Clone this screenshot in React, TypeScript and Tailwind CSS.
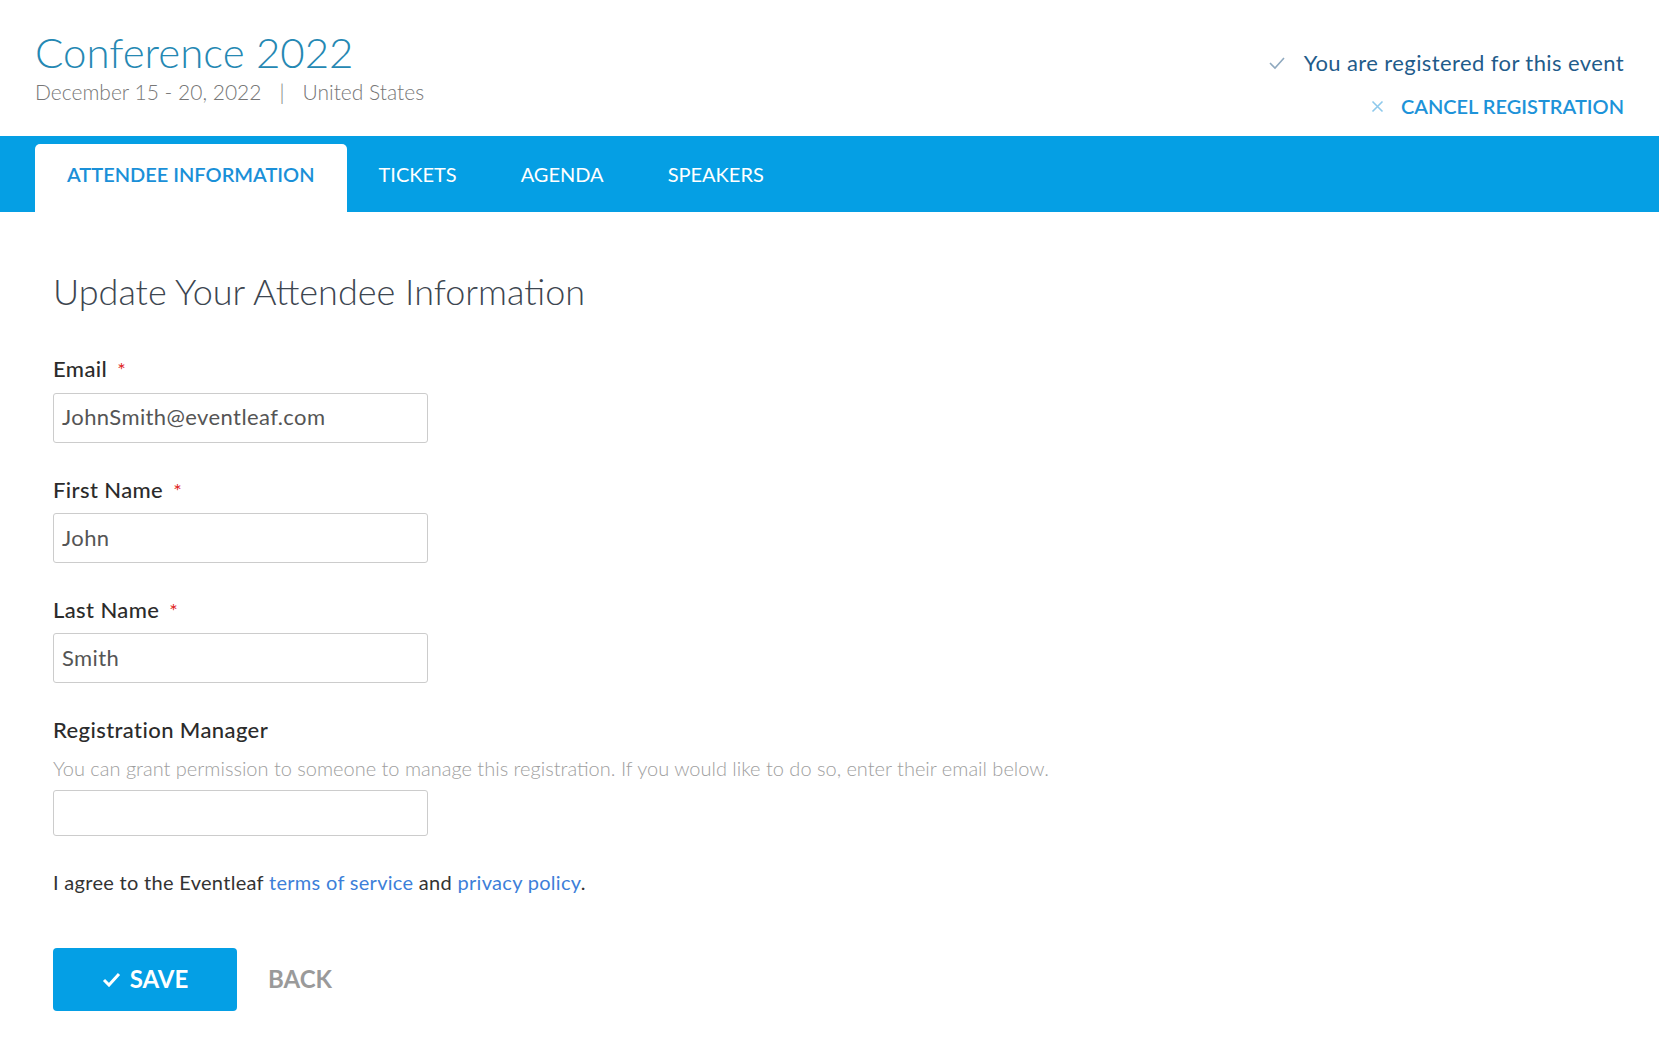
import React from "react"

const tabs = ["ATTENDEE INFORMATION", "TICKETS", "AGENDA", "SPEAKERS"]

function Field({
  label,
  required,
  value,
}: {
  label: string
  required?: boolean
  value: string
}) {
  return (
    <div className="mt-[34px] flex flex-col">
      <div className="text-[22px] leading-[1.2] font-medium tracking-[0.4px] text-[#2b2b2b]">
        {label}
        {required && <span className="ml-[10px] text-[20px] font-normal text-[#e02424]">*</span>}
      </div>
      <div className="mt-[10px] flex h-[50px] w-[375px] items-center rounded-[3px] border border-[#cccccc] px-[8px] text-[22px] leading-[1.2] tracking-[0.4px] text-[#555555]">
        {value}
      </div>
    </div>
  )
}

export default function App() {
  return (
    <div className="min-h-screen bg-white font-['Lato',sans-serif]">
      <header className="flex h-[136px] justify-between px-[35px]">
        <div className="pt-[27px]">
          <h1 className="text-[42px] leading-[1.2] font-light text-[#2588b3]">Conference 2022</h1>
          <p className="mt-[2px] text-[21px] leading-[1.2] font-light text-[#777777]">
            December 15 - 20, 2022
            <span className="mx-[18px]">|</span>
            United States
          </p>
        </div>
        <div className="flex flex-col items-end pt-[50px]">
          <div className="flex items-center gap-[18px] text-[22px] leading-[1.2] tracking-[0.4px] text-[#1f5c8b]">
            <svg width="18" height="14" viewBox="0 0 18 14" fill="none">
              <polyline points="2,7 7,12 16,2" stroke="#8fa9bf" strokeWidth="1.6" />
            </svg>
            You are registered for this event
          </div>
          <div className="mt-[18px] flex items-center gap-[17px] text-[20px] leading-[1.2] font-semibold text-[#1d93d9]">
            <svg width="13" height="13" viewBox="0 0 13 13" fill="none">
              <path d="M1.5 1.5l10 10M11.5 1.5l-10 10" stroke="#8dc9ec" strokeWidth="1.6" />
            </svg>
            CANCEL REGISTRATION
          </div>
        </div>
      </header>

      <nav className="flex h-[76px] items-end bg-[#059fe4] pl-[35px]">
        {tabs.map((tab, i) => (
          <div
            key={tab}
            className={
              i === 0
                ? "flex h-[68px] items-center rounded-t-[5px] bg-white px-[32px] pb-[8px] text-[20px] font-semibold text-[#1a90d8]"
                : "flex h-[68px] items-center px-[32px] pb-[8px] text-[20px] text-white"
            }
          >
            {tab}
          </div>
        ))}
      </nav>

      <main className="flex flex-col items-start pl-[53px] pt-[58px]">
        <h2 className="text-[36px] leading-[1.2] font-light text-[#3d4650]">Update Your Attendee Information</h2>

        <div className="mt-[9px] flex flex-col">
          <Field label="Email" required value="JohnSmith@eventleaf.com" />
          <Field label="First Name" required value="John" />
          <Field label="Last Name" required value="Smith" />
        </div>

        <div className="mt-[34px] flex flex-col">
          <div className="text-[22px] leading-[1.2] font-medium tracking-[0.4px] text-[#2b2b2b]">Registration Manager</div>
          <p className="mt-[12px] text-[20px] leading-[1.2] font-light text-[#9e9e9e]">
            You can grant permission to someone to manage this registration. If you would like to do so, enter their email below.
          </p>
          <div className="mt-[10px] h-[46px] w-[375px] rounded-[3px] border border-[#cccccc]" />
        </div>

        <p className="mt-[34px] text-[20px] leading-[1.2] tracking-[0.3px] text-[#333333]">
          I agree to the Eventleaf <span className="text-[#3d7fd9]">terms of service</span> and{" "}
          <span className="text-[#3d7fd9]">privacy policy</span>.
        </p>

        <div className="mt-[54px] flex items-center gap-[31px]">
          <button className="flex h-[63px] w-[184px] items-center justify-center gap-[9px] rounded-[4px] bg-[#049fe5] text-[24px] font-bold text-white">
            <svg width="19" height="15" viewBox="0 0 19 15" fill="none">
              <polyline points="2,8 7,13 17,2" stroke="white" strokeWidth="3" />
            </svg>
            SAVE
          </button>
          <button className="text-[24px] font-bold text-[#9a9a9a]">BACK</button>
        </div>
      </main>
    </div>
  )
}
